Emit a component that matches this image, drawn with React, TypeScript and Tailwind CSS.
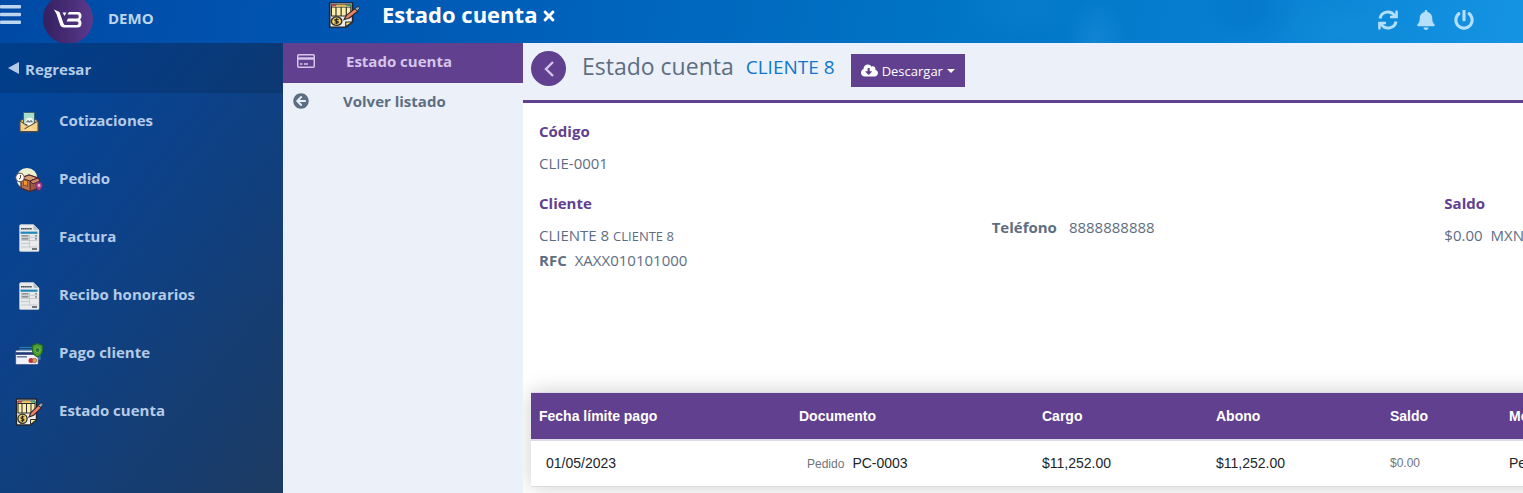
import React from 'react';
import {FaBell, FaCloudDownloadAlt, FaPowerOff, FaTimes, FaArrowCircleLeft} from 'react-icons/fa';

const QuoteIcon = () => (
    <svg viewBox="0 0 28 28" className="size-7" aria-hidden="true">
        <path d="M5 13 14 7l9 6v11H5z" fill="#e9b665" stroke="#3f4c57"/>
        <path d="M8.5 4.5h11v12h-11z" fill="#a5dfcb" stroke="#3f6672"/>
        <circle cx="14.5" cy="13.5" r="3.8" fill="#f4f8f5"/>
        <path d="M12 14.500v-1.500h2v1.500M15 14.500v-1.500h2v1.500" fill="none" stroke="#4b555c"/>
        <path d="m5 13 7.500 5L5 23.500z" fill="#f8cf85"/>
        <path d="m23 13-7.500 5 7.500 5.500z" fill="#f8cf85"/>
        <path d="m5.500 23.500 8-5.500h2l7.500 5.500z" fill="#fbd894"/>
        <path d="m5 13 7.500 5M23 13 9.500 21" fill="none" stroke="#4b4a43"/>
        <path d="M5 13v10.500h18V13" fill="none" stroke="#4b4a43"/>
    </svg>
);

const OrderIcon = () => (
    <svg viewBox="0 0 28 28" className="size-7" aria-hidden="true">
        <circle cx="12" cy="12.500" r="10.500" fill="#edf0cf"/>
        <path d="m6 12 8-3 9 3v10l-8 3.500-9-3.500z" fill="#b97250" stroke="#4d2530" strokeWidth="1.200"/>
        <path d="m6 12 9 3 8-3-9-3z" fill="#d99a70" stroke="#4d2530"/>
        <path d="m15 15 8-3v10l-8 3.500z" fill="#9c5a43" stroke="#4d2530"/>
        <path d="m23 12 2 3-7 3-3-3z" fill="#c98560" stroke="#4d2530"/>
        <path d="M8.500 14v6l2-1.200 2 2.200v-6z" fill="#f29b2c" stroke="#6b3322" strokeWidth=".6"/>
        <circle cx="5" cy="11.500" r="4.300" fill="#f7f7f4" stroke="#5a4646"/>
        <path d="M5.500 9v3l-1.500 1" fill="none" stroke="#5a4646"/>
        <path d="M24 25c-2.500-3-3.300-4-3.300-5.600a3.300 3.300 0 0 1 6.600 0c0 1.600-.8 2.600-3.300 5.600z" fill="#ad4391" stroke="#5f2459" strokeWidth=".7"/>
        <circle cx="24" cy="19.400" r="1.300" fill="#f0b7d8"/>
    </svg>
);

const InvoiceIcon = () => (
    <svg viewBox="0 0 28 28" className="size-7" aria-hidden="true">
        <path d="M6 .5h12.500L24 6v20.500q0 1-1 1H5.500q-1 0-1-1V2q0-1.500 1.500-1.500z" fill="#e9eaeb" stroke="#cdd3d8" strokeWidth=".5"/>
        <path d="M18.500.5V5q0 1 1 1H24z" fill="#b9c0c6"/>
        <path d="M6 4.800h11" stroke="#454c52" strokeWidth="1.600" strokeDasharray="1.500 .3"/>
        <path d="M5.500 8.700h17" stroke="#2488b7" strokeWidth="2.200"/>
        <path d="M6.500 11.800h7M6.500 14.800h7M20 11.800h2M20 14.800h2" stroke="#70777c" strokeWidth="1.200"/>
        <path d="M6 13.300h16.500M6 16.500h16.500M6 19.500h8.500M14.500 10.500V23M6 23h16.500" stroke="#bcc1c5" strokeWidth=".8"/>
        <path d="M17 25h5" stroke="#50575d" strokeWidth="1.600"/>
    </svg>
);

const PaymentIcon = () => (
    <svg viewBox="0 0 28 28" className="size-7" aria-hidden="true">
        <path d="M4 6.500h19l3 2v12H4z" fill="#287dc0" stroke="#163b6c" strokeWidth=".7"/>
        <path d="M4 8.500h20" stroke="#174473"/>
        <rect x=".7" y="10.200" width="22.500" height="14.300" rx="1" fill="#f1f3fa" stroke="#34436d" strokeWidth=".6"/>
        <path d="M.5 13.500h23" stroke="#253775" strokeWidth="2.600"/>
        <path d="M2 16.800h10" stroke="#747d98" strokeWidth="1.600"/>
        <circle cx="16" cy="20.500" r="2.500" fill="#c92d3a"/>
        <circle cx="19.500" cy="20.500" r="2.200" fill="#e8a544" stroke="#7c3940" strokeWidth=".6"/>
        <path d="m22.500 3.500 5 2v4.500q0 4.500-5 7-5-2.500-5-7V5.500z" fill="#4d9e31" stroke="#23662d" strokeWidth="1.200"/>
        <circle cx="22.500" cy="10" r="2.500" fill="#287537" stroke="#8bc451" strokeWidth=".8"/>
    </svg>
);

const StatementIcon = ({className = 'size-7'}: { className?: string }) => (
    <svg viewBox="0 0 28 28" preserveAspectRatio="none" className={className} aria-hidden="true">
        <path d="M1.500 1h20v20.500L16 27H1.500z" fill="#efeee8" stroke="#20252d" strokeWidth="1.400"/>
        <path d="M3 3h17v12H3z" fill="#fbedab" stroke="#2b2c2b"/>
        <path d="M3 3.800h4" stroke="#ca434c" strokeWidth="1.800"/>
        <path d="M8 3.800h7" stroke="#e7ba45" strokeWidth="1.800"/>
        <path d="M16 3.800h4" stroke="#43a376" strokeWidth="1.800"/>
        <path d="M3 5.500h17M7 5.500V15M11.500 5.500V15M16 5.500V15" stroke="#2b2c2b"/>
        <circle cx="7.500" cy="20.700" r="4.600" fill="#f5d35a" stroke="#2b2c2b" strokeWidth="1.300"/>
        <path d="M9.300 18.700H7a1 1 0 0 0 0 2h1a1 1 0 0 1 0 2H5.700M7.500 17.500v6.500" fill="none" stroke="#2b2c2b" strokeWidth="1.100"/>
        <path d="M15.500 26.500v-5h6z" fill="#fae58c" stroke="#2b2c2b"/>
        <path d="m14 19 2-4.500 7.500-7.300 2.700 2.700-7.500 7.300z" fill="#ed8264" stroke="#2b2730" strokeWidth="1.100"/>
        <path d="m23.300 7.500 2-2q1-1 2 0 1 1 0 2L25.700 9.500z" fill="#8fa9b8" stroke="#2b2730" strokeWidth=".8"/>
    </svg>
);

const SyncIcon = () => (
    <svg viewBox="0 0 20 20" className="size-5" fill="none" stroke="currentColor" strokeWidth="3" aria-hidden="true">
        <path d="M2 8.500a8 8 0 0 1 14.500-3M18 11.500a8 8 0 0 1-14.500 3"/>
        <path d="M12 7h6.500V.5M8 13H1.500v6.500" strokeWidth="2.400"/>
        <path d="M19.500 2v6h-6zM.5 18v-6h6z" fill="currentColor" stroke="none"/>
    </svg>
);

const Logo = () => (
    <svg viewBox="0 0 50 50" className="size-[50px] -mt-[6px]" role="img" aria-label="VB">
        <defs>
            <linearGradient id="logo">
                <stop offset="0" stopColor="#34205f"/>
                <stop offset="1" stopColor="#5c398d"/>
            </linearGradient>
        </defs>
        <circle cx="25" cy="25" r="25" fill="url(#logo)"/>
        <path d="m11 15.500 5.500 2.500 4 11.500q.6 1.500 2 1.500H34q1.500 0 1.500-1.700T34 27.500H23.500l1.500-3h9.500q1.200 0 1.200-2t-1.200-2H24.500l1.500-2.500h9q3.500 0 3.500 4 0 2.500-1.500 3.500 1.500 1 1.500 3.500 0 4.500-4 4.500H21q-3 0-4-3l-3.500-10.500z"
              fill="#fff"/>
        <path d="M19.500 18.500h4l-2 3.500z" fill="#fff"/>
    </svg>
);

const menu = [
    {label: 'Cotizaciones', Icon: QuoteIcon},
    {label: 'Pedido', Icon: OrderIcon},
    {label: 'Factura', Icon: InvoiceIcon},
    {label: 'Recibo honorarios', Icon: InvoiceIcon},
    {label: 'Pago cliente', Icon: PaymentIcon},
    {label: 'Estado cuenta', Icon: StatementIcon},
];

const Header: React.FC = () => (
    <header
        className="flex h-[43px] shrink-0 overflow-hidden text-[#bcd6f0] bg-[radial-gradient(ellipse_60px_30px_at_67%_20%,#168bd033,transparent),radial-gradient(ellipse_30px_40px_at_72%_90%,#2b9ade55,transparent),radial-gradient(ellipse_50px_40px_at_82%_20%,#0068c055,transparent),radial-gradient(ellipse_70px_30px_at_88%_70%,#1797e044,transparent),linear-gradient(100deg,#004aa5_0%,#0054b0_20%,#0062bb_38%,#0073c5_60%,#077fd0_80%,#1594e3_100%)]">
        <div className="flex w-[283px] shrink-0">
            <button aria-label="Menú" className="flex h-7 w-[21px] shrink-0 items-center">
                <svg viewBox="0 0 21 19" className="h-[19px] w-[21px]" fill="currentColor" aria-hidden="true">
                    <rect width="21" height="3.500" rx="1"/>
                    <rect y="7.700" width="21" height="3.500" rx="1"/>
                    <rect y="15.500" width="21" height="3.500" rx="1"/>
                </svg>
            </button>
            <div className="ml-[22px] w-[50px] shrink-0"><Logo/></div>
            <span className="ml-[15px] pt-[6px] text-[15px] leading-6 font-bold">DEMO</span>
        </div>
        <div className="flex flex-1 items-start text-white">
            <StatementIcon className="mt-[2px] ml-[45px] h-[26px] w-8"/>
            <h1 className="ml-[22px] text-[22px] leading-7 font-bold">Estado cuenta</h1>
            <button aria-label="Cerrar" className="ml-1 mt-2"><FaTimes className="size-4"/></button>
        </div>
        <div className="mr-[49px] flex items-center gap-[18px] pb-[3px] text-[#b4dffb]">
            <button aria-label="Actualizar"><SyncIcon/></button>
            <button aria-label="Notificaciones"><FaBell className="size-5"/></button>
            <button aria-label="Salir"><FaPowerOff className="size-5"/></button>
        </div>
    </header>
);

const Sidebar: React.FC = () => (
    <nav className="w-[283px] shrink-0 bg-[linear-gradient(128deg,#00479f_0%,#0b428c_35%,#1d3b62_100%)] text-[15px] font-bold text-[#b4cbe8]">
        <a href="#" className="flex h-[50px] items-center bg-black/12 pl-2 pt-[3px]">
            <svg viewBox="0 0 11 12" className="-mt-1 mr-[6px] h-3 w-[11px]" fill="currentColor" aria-hidden="true">
                <path d="M11 0v12L0 6z"/>
            </svg>
            Regresar
        </a>
        {menu.map(({label, Icon}) => (
            <a key={label} href="#" className="flex h-[58px] items-center gap-4 pl-[15px]">
                <Icon/>
                <span className="pb-1">{label}</span>
            </a>
        ))}
    </nav>
);

const SubMenu: React.FC = () => (
    <nav className="w-60 shrink-0 bg-[#ebf0f9] text-[15px] font-bold text-[#5e6e82]">
        <a href="#" className="flex h-10 items-center bg-[#61408f] pb-1 pl-[14px] text-[#d5c5ea]">
            <svg viewBox="0 0 18 14" className="h-[14px] w-[18px]" fill="none" stroke="currentColor" aria-hidden="true">
                <rect x=".75" y=".75" width="16.500" height="12.500" rx="1" strokeWidth="1.500"/>
                <path d="M1 4.500h16" strokeWidth="2.500"/>
                <path d="M3 10h2.500M7 10h4" strokeWidth="1.500"/>
            </svg>
            <span className="ml-[31px]">Estado cuenta</span>
        </a>
        <a href="#" className="flex h-9 items-center pl-[10px]">
            <FaArrowCircleLeft className="size-4"/>
            <span className="ml-[34px]">Volver listado</span>
        </a>
    </nav>
);

const AccountTable: React.FC = () => (
    <div className="min-w-[1360px] shadow-[0_0_20px_rgba(0,0,0,0.2)]">
        <table className="w-full table-fixed border-collapse bg-white text-left font-['Liberation_Sans',Arial,sans-serif] text-sm text-[#212529]">
            <colgroup>
                <col className="w-[260px]"/>
                <col className="w-[243px]"/>
                <col className="w-[174px]"/>
                <col className="w-[174px]"/>
                <col className="w-[119px]"/>
                <col/>
            </colgroup>
            <thead>
            <tr className="h-[47px] border-t border-b-2 border-[#dfdaeb] bg-[#61408f] text-white">
                <th className="px-2">Fecha límite pago</th>
                <th className="px-2">Documento</th>
                <th className="px-2">Cargo</th>
                <th className="px-2">Abono</th>
                <th className="px-2">Saldo</th>
                <th className="px-2">Moneda</th>
            </tr>
            </thead>
            <tbody>
            <tr className="h-[47px] border-b border-[#dcdcdc]">
                <td className="px-[15px]">01/05/2023</td>
                <td className="px-4"><small className="mr-2 text-xs text-[#6c757d]">Pedido</small>PC-0003</td>
                <td className="px-2">$11,252.00</td>
                <td className="px-2">$11,252.00</td>
                <td className="px-2 text-xs text-[#6c757d]">$0.00</td>
                <td className="px-2">Peso</td>
            </tr>
            </tbody>
        </table>
    </div>
);

const App: React.FC = () => {
    return (
        <div className="flex min-h-screen flex-col overflow-hidden bg-white font-['Open_Sans','Noto_Sans',sans-serif]">
            <Header/>
            <div className="flex flex-1">
                <Sidebar/>
                <SubMenu/>
                <main className="min-w-0 flex-1 overflow-hidden text-[15px] leading-6 text-[#5e6e82]">
                    <div className="flex h-[60px] items-start border-b-[3px] border-[#61408f] bg-[#ebf0f9] pt-2 pl-2">
                        <button aria-label="Atrás"
                                className="flex size-[35px] items-center justify-center rounded-full bg-[#61408f] text-[#d5c5ea]">
                            <svg viewBox="0 0 10 16" className="h-4 w-[10px]" fill="none" stroke="currentColor"
                                 strokeWidth="2.400" aria-hidden="true">
                                <path d="M9 1 2 8l7 7"/>
                            </svg>
                        </button>
                        <h2 className="ml-4 text-[23px] leading-[30px]">Estado cuenta</h2>
                        <a href="#" className="ml-3 pt-px text-[19px] leading-[30px] text-[#0f77cb]">CLIENTE 8</a>
                        <button className="ml-4 mt-[3px] flex h-[33px] items-center bg-[#61408f] px-[10px] text-[13px] text-white">
                            <FaCloudDownloadAlt className="mr-1 h-[17px] w-[17px]"/>
                            Descargar
                            <span className="ml-1 border-x-4 border-t-4 border-x-transparent border-t-white"/>
                        </button>
                    </div>
                    <div className="h-[289px] min-w-[1374px] pt-4 pl-4">
                        <div className="mb-2 font-bold text-[#61408f]">Código</div>
                        <div>CLIE-0001</div>
                        <div className="mt-4 grid grid-cols-3">
                            <div>
                                <div className="mb-2 font-bold text-[#61408f]">Cliente</div>
                                <div>CLIENTE 8 <small className="text-[13px]">CLIENTE 8</small></div>
                                <div><b className="mr-2">RFC</b>XAXX010101000</div>
                            </div>
                            <div className="pt-6"><b className="mr-3">Teléfono</b>8888888888</div>
                            <div>
                                <div className="mb-2 font-bold text-[#61408f]">Saldo</div>
                                <div><span className="mr-2">$0.00</span>MXN</div>
                            </div>
                        </div>
                    </div>
                    <div className="pl-2"><AccountTable/></div>
                </main>
            </div>
        </div>
    );
};


export default App
